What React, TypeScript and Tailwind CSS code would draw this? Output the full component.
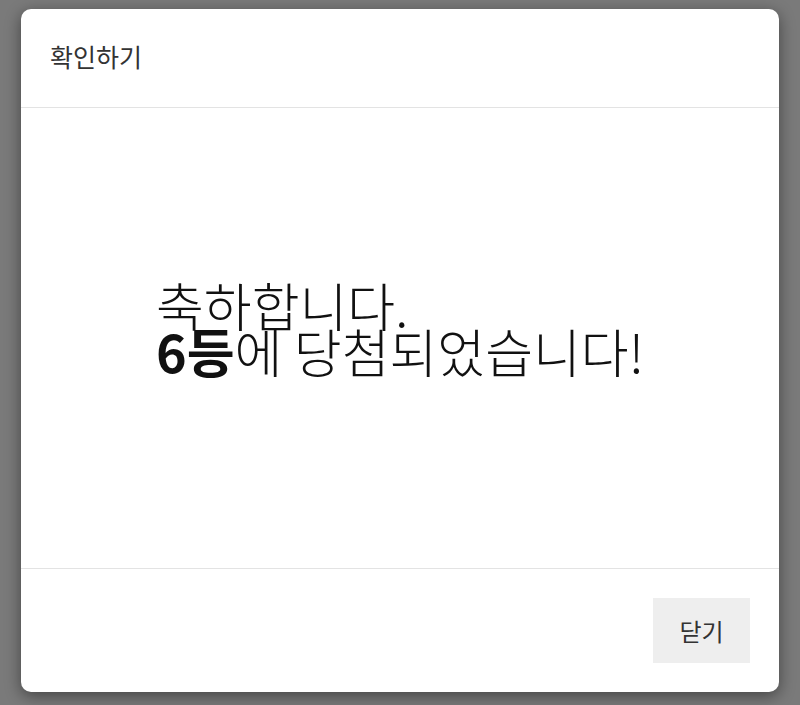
const font = { fontFamily: '"Noto Sans CJK KR", "Noto Sans", sans-serif' };

export default function App() {
  return (
    <div
      className="h-[705px] w-[800px] overflow-hidden bg-[#7a7a7a] pl-[21px] pt-[9px]"
      style={font}
    >
      {/* Modal */}
      <div className="flex h-[683px] w-[758px] flex-col overflow-hidden rounded-[10px] bg-white shadow-[0_4px_16px_rgba(0,0,0,0.45)]">
        {/* Header */}
        <div className="flex h-[99px] shrink-0 items-center border-b border-[#e3e3e3] pl-[29px]">
          <h2 className="pb-[2px] text-[25px] font-normal text-[#333]">확인하기</h2>
        </div>

        {/* Body */}
        <div className="flex flex-1 items-center justify-center pb-[20px]">
          <p className="text-left text-[52px] font-light leading-[46px] text-[#111]">
            축하합니다.
            <br />
            <b className="font-bold">6등</b>에 당첨되었습니다!
          </p>
        </div>

        {/* Footer */}
        <div className="flex h-[124px] shrink-0 justify-end border-t border-[#e3e3e3] pr-[29px] pt-[29px]">
          <button className="h-[65px] w-[97px] bg-[#eeeeee] text-[24px] text-[#333]">
            닫기
          </button>
        </div>
      </div>
    </div>
  );
}
